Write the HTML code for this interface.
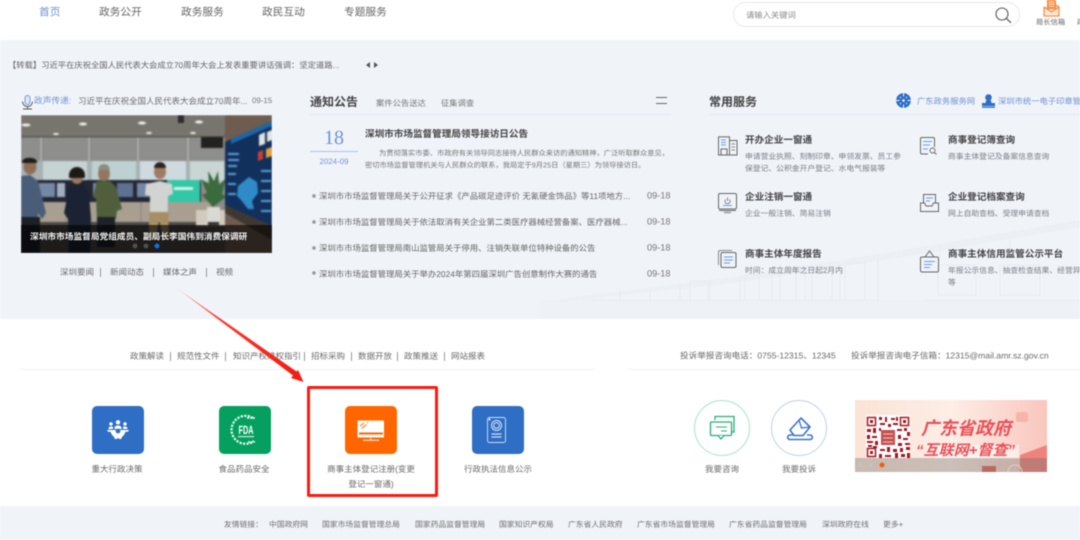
<!DOCTYPE html>
<html lang="zh-CN">
<head>
<meta charset="utf-8">
<title>深圳市市场监督管理局</title>
<style>
html,body{margin:0;padding:0;width:1080px;height:540px;overflow:hidden;background:#fff}
body{font-family:"Liberation Sans","Noto Sans CJK SC",sans-serif;color:#666;position:relative;text-rendering:geometricPrecision}
#p{position:absolute;left:0;top:0;width:1080px;height:540px;overflow:hidden;filter:blur(.4px)}
#p div,#p svg{position:absolute}
.t{white-space:nowrap;line-height:1;transform:translateY(-50%)}
.c{transform:translate(-50%,-50%);text-align:center}
.nav{font-size:10.7px;top:13px;color:#666}
.li{font-size:8.4px;left:319px;color:#666}
.dt{font-size:9.2px;left:647px;color:#777}
.h{font-size:9.6px;font-weight:700;color:#444}
.d{font-size:7.8px;color:#7b7f85}
.b{font-size:8.5px;top:356px;color:#6a6a6a}
.f{font-size:7.8px;top:525px;color:#6e6e6e}
.lb{font-size:8.5px;color:#6a6a6a}
.sp{width:1px;background:#999;height:9px}
.box{width:52px;height:48px;top:406px;border-radius:5px}
</style>
</head>
<body>
<div id="p">
<!-- backgrounds -->
<div style="left:0;top:40px;width:1080px;height:279px;background:#f0f4f9"></div>
<div style="left:0;top:506px;width:1080px;height:34px;background:#f0f4f9"></div>

<!-- bridge -->
<svg style="left:540px;top:205px" width="540" height="114" viewBox="0 0 540 114">
<rect x="0" y="95" width="540" height="19" fill="#edf0f5" opacity=".8"/>
<path d="M20 94 L193 72 L345 48 L540 15 L540 22 L345 55 L193 78 L20 97Z" fill="#e9edf2" opacity=".7"/>
<g fill="none" stroke="#e8ebf1" stroke-width="1">
<path d="M80 85v10M110 82v13M140 79v16M170 75v20M200 72v23M232 66v29M265 62v33M300 58v37M338 54v41"/>
<path d="M150 76h18v19h-18zM205 70h14v25h-14zM240 65h16v30h-16zM272 62h20v33h-20zM305 58h20v37h-20zM398 60h38v30h-38zM460 60h40v30h-40z"/>
<path d="M50 95h290M385 95h170"/>
<path d="M400 40v12M470 32v12"/>
</g>
</svg>

<!-- header -->
<div class="t nav" style="left:39px;color:#6f93d2">首页</div>
<div class="t nav" style="left:99px">政务公开</div>
<div class="t nav" style="left:181px">政务服务</div>
<div class="t nav" style="left:262px">政民互动</div>
<div class="t nav" style="left:344px">专题服务</div>
<div style="left:733px;top:2px;width:285px;height:23px;border:1px solid #e8e9eb;border-radius:13px;background:#fff"></div>
<div class="t" style="left:746px;top:14.500px;font-size:8.300px;color:#8a8a8a">请输入关键词</div>
<svg style="left:995px;top:7px" width="17" height="17" viewBox="0 0 17 17"><circle cx="7" cy="7" r="6" fill="none" stroke="#555" stroke-width="1.100"/><path d="M11.200 11.300l4.800 4.500" stroke="#555" stroke-width="1.200" fill="none"/></svg>
<svg style="left:1043px;top:0" width="17" height="17" viewBox="0 0 17 17"><path d="M1 7v9h15V7l-3-2M1 7l7.500 5L16 7" fill="#ffe9d8" stroke="#f47f2f" stroke-width="1.100"/><rect x="4" y="-2" width="9" height="11" rx="1" fill="#f9863a"/><path d="M5.500 2h6M5.500 4.200h6M5.500 6.400h6" stroke="#fff" stroke-width=".8"/></svg>
<div class="t" style="left:1036px;top:22px;font-size:7.300px;color:#666">局长信箱</div>
<div class="t" style="left:1077px;top:22px;font-size:7.300px;color:#666">政务</div>

<!-- ticker -->
<div class="t" style="left:8px;top:65px;font-size:8.300px;color:#666">【转载】习近平在庆祝全国人民代表大会成立70周年大会上发表重要讲话强调：坚定道路...</div>
<svg style="left:365px;top:61px" width="15" height="8" viewBox="0 0 15 8"><path d="M1 4l4-3v6zM9 1l4 3-4 3z" fill="#555"/></svg>

<!-- left col -->
<svg style="left:21px;top:95px" width="13" height="15" viewBox="0 0 13 15"><rect x="4" y=".5" width="5" height="9" rx="2.500" fill="#dbe7f8" stroke="#6d94d4" stroke-width=".9"/><path d="M1.500 6.500a5 5 0 0 0 10 0M6.500 11.500v2" fill="none" stroke="#555" stroke-width=".9"/><path d="M2 14h9" stroke="#555" stroke-width="1"/></svg>
<div class="t" style="left:34px;top:101px;font-size:8.700px;color:#6f93d2">政声传递:</div>
<div class="t" style="left:78px;top:101px;font-size:8.500px;color:#6d6d6d">习近平在庆祝全国人民代表大会成立70周年...</div>
<div class="t" style="left:252px;top:101px;font-size:7.900px;color:#777">09-15</div>

<div style="left:21px;top:115px;width:251px;height:138px;overflow:hidden">
<svg style="left:0;top:0;filter:blur(.8px)" width="251" height="138" viewBox="0 0 251 138">
<rect width="251" height="138" fill="#8d8b86"/>
<rect width="205" height="22" fill="#77756e"/>
<rect y="22" width="205" height="24" fill="#8e8e8c"/>
<path d="M20 22v24M68 22v24M117 22v24M167 22v24" stroke="#c2c2be" stroke-width="1"/>
<rect y="46" width="205" height="22" fill="#a7b2b2"/>
<rect x="22" y="46" width="44" height="20" fill="#c5d4d3"/>
<rect x="71" y="46" width="44" height="20" fill="#bed1d2"/>
<rect x="119" y="46" width="46" height="20" fill="#cfdadf"/>
<rect x="169" y="46" width="34" height="20" fill="#c9d6d4"/>
<rect y="21" width="205" height="1.500" fill="#5a574f"/>
<g fill="#f3f1e6"><ellipse cx="5" cy="10" rx="4.500" ry="1.500"/><ellipse cx="62" cy="9" rx="4" ry="1.500"/><ellipse cx="121" cy="8" rx="4" ry="1.500"/><ellipse cx="178" cy="7" rx="4" ry="1.500"/><ellipse cx="35" cy="19" rx="3" ry="1"/><ellipse cx="128" cy="18" rx="3" ry="1"/><ellipse cx="172" cy="18" rx="3" ry="1"/></g>
<rect x="180" y="22" width="22" height="11" fill="#22211f"/>
<rect x="157" y="0" width="6" height="8" fill="#2c2c2c"/>
<rect y="65" width="180" height="22" fill="#232735"/>
<g fill="#7487a3"><rect x="18" y="68" width="16" height="14"/><rect x="36" y="68" width="8" height="14" fill="#a2aec0"/><rect x="72" y="68" width="16" height="14"/><rect x="96" y="68" width="16" height="14" fill="#5d7190"/><rect x="116" y="68" width="14" height="14"/></g>
<rect y="87" width="190" height="20" fill="#a89f91"/>
<path d="M45 87v20M82 87v20M120 87v20M147 87v20" stroke="#8d8577"/>
<rect x="146" y="65" width="33" height="22" fill="#31c7a7"/>
<rect x="153" y="72" width="19" height="3" fill="#d5f2e9"/>
<rect y="107" width="205" height="31" fill="#4c4a46"/>
<rect x="175" y="95" width="30" height="16" fill="#d2cabd"/>
<path d="M192 92l-11-12 5-2-6-14 8 5-1-13 6 10 4-10 1 14 7-7-4 16 4 3z" fill="#3a6b3c"/>
<rect x="186" y="92" width="13" height="15" fill="#d9d9d5"/>
<rect x="187" y="107" width="11" height="3.500" fill="#33322f"/>
<rect x="204" y="0" width="47" height="138" fill="#6e5c50"/>
<path d="M204 27L251 6V111L204 90Z" fill="#12305c"/>
<path d="M210 24L251 6V11L210 29Z" fill="#1c66a8"/>
<path d="M217 71l11-9 8 5 1 11-6 8 2 8-6 0-7-9-4-4z" fill="#2f8bc8"/>
<path d="M238 20l6-3v12l-6 2zM246 17l5-2v10l-5 2z" fill="#e2e2e2"/>
<path d="M237 37l5-2v9l-5 2z" fill="#cf3c30"/><path d="M245 34l6-2v9l-6 2z" fill="#e0a23c"/>
<path d="M207 38h11v2h-11zM207 44h11v2h-11zM207 50h9v2h-9zM207 58h8v2h-8zM207 68h8v2h-8zM207 78h8v2h-8zM240 55h10v2h-10zM240 65h10v2h-10zM240 75h10v2h-10zM240 85h10v2h-10zM240 95h10v2h-10z" fill="#5fa0d6"/>
<path d="M204 90L251 111V125L204 98Z" fill="#3f3832"/>
<ellipse cx="9" cy="52" rx="6.500" ry="7.500" fill="#8f6e58"/><path d="M1 46a8 5 0 0 1 15 0v2H1z" fill="#1f1c1a"/>
<path d="M0 61l9-1 8 6 8 32-4 6-4-6 0 4H0z" fill="#4a5d78"/><rect x="0" y="102" width="19" height="36" fill="#1c1f26"/>
<ellipse cx="56" cy="62" rx="6" ry="7" fill="#9b7760"/><path d="M48 60a8 8 0 0 1 16 0l0 3H48z" fill="#1c1a18"/>
<path d="M49 69h13l6 10 2 24-1 35H48l-1-34-4-6z" fill="#1b2233"/>
<ellipse cx="83" cy="59" rx="6" ry="7" fill="#94755e"/><path d="M77 55a6 6 0 0 1 12 0z" fill="#8d8d84"/>
<path d="M76 66h13l6 6 6 22-5 2-1 8H76l-1-20-3-2z" fill="#4f5f3b"/><rect x="76" y="102" width="18" height="30" fill="#1d2128"/>
<ellipse cx="139" cy="57" rx="6" ry="7" fill="#a07b60"/><path d="M133 53a6 6 0 0 1 12 0z" fill="#2a2420"/>
<path d="M125 69l14-3 12 3 1 10-5 2 0 16h-18l0-16-5-1z" fill="#d2d4d1"/>
<path d="M128 97h19l1 26h-6l-4-20-3 20h-7z" fill="#a88e63"/>
</svg>
<svg style="left:0;top:0" width="251" height="138" viewBox="0 0 251 138">
<rect x="0" y="110" width="251" height="28" fill="#000" opacity=".62"/>
<circle cx="114" cy="131" r="2.500" fill="#4f4f4f"/><circle cx="125" cy="131" r="2.500" fill="#4f4f4f"/><circle cx="136" cy="131" r="2.500" fill="#0b6fe8"/>
</svg>
</div>
<div class="t" style="left:30px;top:237px;font-size:8.700px;font-weight:700;color:#f2f2f2">深圳市市场监督局党组成员、副局长李国伟到消费保调研</div>

<div class="t lb" style="left:60px;top:272px">深圳要闻</div>
<div class="sp" style="left:100px;top:268px"></div>
<div class="t lb" style="left:110px;top:272px">新闻动态</div>
<div class="sp" style="left:153px;top:268px"></div>
<div class="t lb" style="left:163px;top:272px">媒体之声</div>
<div class="sp" style="left:206px;top:268px"></div>
<div class="t lb" style="left:216px;top:272px">视频</div>

<!-- notices -->
<div class="t" style="left:310px;top:102px;font-size:12px;font-weight:700;color:#444">通知公告</div>
<div class="t" style="left:376px;top:102.500px;font-size:8.300px;color:#777">案件公告送达</div>
<div class="t" style="left:441px;top:102.500px;font-size:8.300px;color:#777">征集调查</div>
<div style="left:656px;top:97px;width:11px;height:1px;background:#666"></div>
<div style="left:656px;top:103px;width:11px;height:1px;background:#666"></div>
<div style="left:310px;top:114px;width:361px;height:1px;background:#e4e8ee"></div>
<div class="t c" style="left:334px;top:137.500px;font-family:'Liberation Serif',serif;font-size:20px;color:#6f93d2">18</div>
<div style="left:310px;top:151px;width:48px;height:1px;background:#a9c2ea"></div>
<div class="t c" style="left:334px;top:162px;font-size:7.900px;color:#6f93d2">2024-09</div>
<div class="t" style="left:365px;top:134.500px;font-size:9.600px;font-weight:700;color:#444">深圳市市场监督管理局领导接访日公告</div>
<div class="t" style="left:379px;top:153px;font-size:7.250px;color:#777">为贯彻落实市委、市政府有关领导同志接待人民群众来访的通知精神，广泛听取群众意见，</div>
<div class="t" style="left:365px;top:165px;font-size:7.250px;color:#777">密切市场监督管理机关与人民群众的联系，我局定于9月25日（星期三）为领导接访日。</div>

<svg style="left:311px;top:193px" width="6" height="84" viewBox="0 0 6 84"><g fill="#aaa" stroke="#888" stroke-width=".8"><circle cx="3" cy="3" r="1.300"/><circle cx="3" cy="29" r="1.300"/><circle cx="3" cy="55" r="1.300"/><circle cx="3" cy="80" r="1.300"/></g></svg>
<div class="t li" style="top:196px">深圳市市场监督管理局关于公开征求《产品碳足迹评价 无氰硬金饰品》等11项地方...</div>
<div class="t dt" style="top:196px">09-18</div>
<div class="t li" style="top:222px">深圳市市场监督管理局关于依法取消有关企业第二类医疗器械经营备案、医疗器械...</div>
<div class="t dt" style="top:222px">09-18</div>
<div class="t li" style="top:248px">深圳市市场监督管理局南山监管局关于停用、注销失联单位特种设备的公告</div>
<div class="t dt" style="top:248px">09-18</div>
<div class="t li" style="top:273.500px">深圳市市场监督管理局关于举办2024年第四届深圳广告创意制作大赛的通告</div>
<div class="t dt" style="top:273.500px">09-18</div>

<!-- services -->
<div class="t" style="left:709px;top:102px;font-size:12px;font-weight:700;color:#444">常用服务</div>
<svg style="left:896px;top:93px" width="15" height="15" viewBox="0 0 15 15"><circle cx="7.500" cy="7.500" r="7.400" fill="#2f6fc4"/><path d="M7.500 0v3.500M7.500 11.500V15M0 7.500h3.500M11.500 7.500H15M5 5l-1-1M10 5l1-1M5 10l-1 1M10 10l1 1" stroke="#f0f4f9" stroke-width="1"/><circle cx="7.500" cy="7.500" r="1.300" fill="#f0f4f9"/></svg>
<div class="t" style="left:917px;top:101px;font-size:8.300px;color:#6f93d2">广东政务服务网</div>
<svg style="left:982px;top:94px" width="13" height="14" viewBox="0 0 13 14"><circle cx="6.500" cy="3.500" r="3.300" fill="#2f6fc4"/><path d="M4 6.500h5l.5 2.500h3.500v3H0V9h3.500z" fill="#2f6fc4"/><rect y="12.500" width="13" height="1.300" fill="#2f6fc4"/></svg>
<div class="t" style="left:998px;top:101px;font-size:8.300px;color:#6f93d2">深圳市统一电子印章管理</div>
<div style="left:709px;top:114px;width:371px;height:1px;background:#e4e8ee"></div>

<!-- service rows -->
<svg style="left:718px;top:136px" width="20" height="20" viewBox="0 0 20 20"><g fill="none" stroke="#666" stroke-width="1"><path d="M.5 19V.9h11V19zM11.500 4.500H19V19H.5M3 19v-6h6v6"/><path d="M13.500 8h3.500M13.500 11h3.500M13.500 14h3.500" stroke-width=".8"/></g><path d="M3 4h5M3 6.500h5M3 9h5" stroke="#6b9be0" stroke-width=".9" fill="none"/></svg>
<svg style="left:718px;top:193px" width="20" height="21" viewBox="0 0 20 21"><rect x=".5" y=".5" width="18" height="15.500" rx="1.500" fill="none" stroke="#666"/><path d="M1 17.500h17" stroke="#666"/><path d="M6 19.500h7" stroke="#999" stroke-width="1.500"/><path d="M5 12.500h9" stroke="#6b9be0"/><path d="M9.500 4.500v3.500M7.500 6.500a2.600 2.600 0 1 0 4 0" stroke="#666" fill="none" stroke-width=".8"/></svg>
<svg style="left:718px;top:250px" width="19" height="18" viewBox="0 0 19 18"><path d="M.5 15V2C.5 1 1 .5 2 .5h12" fill="none" stroke="#888"/><rect x="3" y="2.500" width="15" height="15" rx="1.500" fill="none" stroke="#666"/><path d="M6 7h9M6 10h9M6 13h6" stroke="#6b9be0" stroke-width=".9"/></svg>
<div class="t h" style="left:745px;top:140.500px">开办企业一窗通</div>
<div class="t d" style="left:745px;top:157px">申请营业执照、刻制印章、申领发票、员工参</div>
<div class="t d" style="left:745px;top:169px">保登记、公积金开户登记、水电气报装等</div>
<div class="t h" style="left:745px;top:197.500px">企业注销一窗通</div>
<div class="t d" style="left:745px;top:213.500px">企业一般注销、简易注销</div>
<div class="t h" style="left:745px;top:254.500px">商事主体年度报告</div>
<div class="t d" style="left:745px;top:271px">时间：成立周年之日起2月内</div>

<svg style="left:920px;top:137px" width="18" height="19" viewBox="0 0 18 19"><path d="M14.500 10V2C14.500 1 14 .5 13 .5H2C1 .5.5 1 .5 2v13.500c0 1 .5 1.500 1.500 1.500h6" fill="none" stroke="#666"/><path d="M3 4.500h9M3 8h7M3 12h5" stroke="#6b9be0"/><circle cx="12.500" cy="13.500" r="2.500" fill="none" stroke="#666" stroke-width=".9"/><path d="M14.500 15.500l2 2" stroke="#666"/></svg>
<svg style="left:920px;top:193px" width="19" height="20" viewBox="0 0 19 20"><path d="M3.500 10V1.500h12V10" fill="none" stroke="#666"/><path d="M.5 10v8.500h18V10h-5L12 13H6l-1.500-3z" fill="none" stroke="#666"/><path d="M6 5h7M6 8h4" stroke="#6b9be0"/></svg>
<svg style="left:920px;top:250px" width="19" height="23" viewBox="0 0 19 23"><path d="M9.500 1L5 7h9z" fill="none" stroke="#666"/><rect x=".5" y="7" width="18" height="15" rx="1.500" fill="none" stroke="#666"/><path d="M4 11.500h11M4 14.500h8M4 17.500h6" stroke="#6b9be0"/></svg>
<div class="t h" style="left:948px;top:140.500px">商事登记簿查询</div>
<div class="t d" style="left:948px;top:157px">商事主体登记及备案信息查询</div>
<div class="t h" style="left:948px;top:197.500px">企业登记档案查询</div>
<div class="t d" style="left:948px;top:213.500px">网上自助查档、受理申请查档</div>
<div class="t h" style="left:948px;top:254.500px">商事主体信用监管公示平台</div>
<div class="t d" style="left:948px;top:270.500px">年报公示信息、抽查检查结果、经营异常</div>
<div class="t d" style="left:948px;top:282.500px">等</div>

<!-- bottom links -->
<div class="t b" style="left:130px">政策解读</div>
<div class="sp" style="left:170px;top:352px"></div>
<div class="t b" style="left:177px">规范性文件</div>
<div class="sp" style="left:225px;top:352px"></div>
<div class="t b" style="left:233px">知识产权维权指引</div>
<div class="sp" style="left:304px;top:352px"></div>
<div class="t b" style="left:311px">招标采购</div>
<div class="sp" style="left:351px;top:352px"></div>
<div class="t b" style="left:358px">数据开放</div>
<div class="sp" style="left:397px;top:352px"></div>
<div class="t b" style="left:404px">政策推送</div>
<div class="sp" style="left:444px;top:352px"></div>
<div class="t b" style="left:451px">网站报表</div>
<div class="t b" style="left:680px;font-size:8.600px">投诉举报咨询电话：0755-12315、12345</div>
<div class="t b" style="left:851px;font-size:8.600px">投诉举报咨询电子信箱：12315@mail.amr.sz.gov.cn</div>
<div style="left:20px;top:369px;width:574px;height:1px;background:#f1f1f1"></div>
<div style="left:628px;top:369px;width:452px;height:1px;background:#f1f1f1"></div>

<!-- app icons -->
<div class="box" style="left:92px;background:#2e6ec4"></div>
<svg style="left:107px;top:420px" width="22" height="19" viewBox="0 0 22 19"><g fill="#fff"><circle cx="11" cy="2.300" r="2.200"/><circle cx="4" cy="4" r="1.700"/><circle cx="18" cy="4" r="1.700"/><path d="M7.500 8c0-3.300 7-3.300 7 0v1h-7zM1.500 8.500c0-2 3-2.500 4.500-1.500v2H1.500zM20.500 8.500c0-2-3-2.500-4.500-1.500v2h4.500z"/><path d="M0 10h22l-1 1.800h-2.500c-1 2.700-2 4-3 4.500L14 19h-1.500l-1.500-1-1.500 1H8l-1.500-2.700c-1-.5-2-1.800-3-4.500H1z"/></g><circle cx="11" cy="11" r="2.400" fill="#2e6ec4"/></svg>
<div class="t lb c" style="left:117px;top:469px">重大行政决策</div>

<div class="box" style="left:218.500px;background:#05a05f"></div>
<svg style="left:229px;top:414px" width="29" height="32" viewBox="0 0 29 32"><g fill="none" stroke="#eaf8f1" stroke-width="2.200" stroke-dasharray="2.200 1.300"><path d="M24 4A14 14 0 1 0 25 27"/></g><text x="17" y="20" text-anchor="middle" font-size="12" font-weight="700" fill="#fff" font-family="'Liberation Sans',sans-serif" textLength="15" lengthAdjust="spacingAndGlyphs">FDA</text><rect x="9" y="22" width="16" height="1.200" fill="#cdeedd"/><path d="M18 4h8M19 28h7" stroke="#eaf8f1" stroke-width="1.500" stroke-dasharray="2 1"/></svg>
<div class="t lb c" style="left:244px;top:469px">食品药品安全</div>

<div class="box" style="left:345px;background:#ff6600"></div>
<svg style="left:357px;top:420px" width="28" height="22" viewBox="0 0 28 22"><rect x=".5" y=".5" width="26.500" height="17" rx=".8" fill="#fff"/><rect x="2" y="12.500" width="24" height="2" fill="#ff6600"/><path d="M3 6l4-3M4.500 8.500l5-4M10 3l1-.7" stroke="#ff8a2c" stroke-width="1.200"/><rect x="13" y="18" width="1.500" height="2" fill="#ffc9a3"/><rect x="6" y="19.500" width="16" height="1.500" fill="#ffc9a3"/></svg>
<div class="t lb c" style="left:371px;top:469px">商事主体登记注册(变更</div>
<div class="t lb c" style="left:371px;top:483.500px">登记一窗通)</div>

<div class="box" style="left:472px;background:#2e6ec4"></div>
<svg style="left:486px;top:416px" width="21" height="28" viewBox="0 0 21 28"><rect x="1.500" y="1.500" width="18" height="25" rx="2" fill="none" stroke="#cfe0f6" stroke-width=".9"/><circle cx="10.500" cy="9.500" r="5" fill="none" stroke="#dce8f8" stroke-width="1"/><circle cx="10.500" cy="9.500" r="2.800" fill="none" stroke="#dce8f8" stroke-width="1"/><circle cx="3.500" cy="3.500" r="1" fill="#fff"/><path d="M5.500 18h10M5.500 21h10" stroke="#cfe0f6" stroke-width="1.200"/></svg>
<div class="t lb c" style="left:498px;top:469px">行政执法信息公示</div>

<!-- red highlight -->
<div style="left:307px;top:386px;width:125px;height:105px;border:3px solid #fb1a12;border-radius:2px"></div>
<svg style="left:0;top:0" width="1080" height="540" viewBox="0 0 1080 540">
<defs><linearGradient id="g" x1="175" y1="287" x2="303" y2="382" gradientUnits="userSpaceOnUse"><stop offset="0" stop-color="#ff8a80" stop-opacity=".5"/><stop offset=".35" stop-color="#fa3a30"/><stop offset="1" stop-color="#f5190f"/></linearGradient></defs>
<path d="M175 287L296.500 371.500 298 370 303.500 382 291 378 293 375.500Z" fill="url(#g)"/>
</svg>

<!-- consult -->
<svg style="left:693px;top:399px" width="58" height="58" viewBox="0 0 58 58"><circle cx="29" cy="29" r="27.500" fill="#fff" stroke="#a6e3c9"/><path d="M22 21v-3.500h19v15.500h-3" fill="none" stroke="#26af7a" stroke-width="1.300"/><rect x="17.500" y="23" width="21" height="13.500" rx="1" fill="#fff" stroke="#26af7a" stroke-width="1.300"/><path d="M25 36.500l3 3.500 3-3.500" fill="#fff" stroke="#26af7a" stroke-width="1.300"/><path d="M23 28h11M28 32h6" stroke="#26af7a" stroke-width="1"/></svg>
<div class="t lb c" style="left:722px;top:468.500px">我要咨询</div>
<svg style="left:770px;top:399px" width="58" height="58" viewBox="0 0 58 58"><circle cx="29" cy="29" r="27.500" fill="#fff" stroke="#bcd0ef"/><path d="M31 19L40 28 33 36.500H24L20 31z" fill="#fff" stroke="#3a74cb" stroke-width="1.600" stroke-linejoin="round"/><path d="M29 21l2.500 8 8-1" fill="none" stroke="#3a74cb" stroke-width="1.300"/><path d="M23 36h-3c-3 0-3 4.500 0 4.500h20c3 0 3-4.500 0-4.500h-3" fill="none" stroke="#3a74cb" stroke-width="1.600"/></svg>
<div class="t lb c" style="left:799px;top:468.500px">我要投诉</div>

<!-- banner -->
<svg style="left:855px;top:400px" width="192" height="72" viewBox="0 0 192 72">
<defs><linearGradient id="bg" x1="0" y1="0" x2="1" y2="0"><stop offset="0" stop-color="#fbe3d6"/><stop offset=".5" stop-color="#fdeee6"/><stop offset="1" stop-color="#f9c6bd"/></linearGradient></defs>
<rect width="192" height="72" fill="url(#bg)"/>
<rect x="161" y="12" width="12" height="10" rx="2" fill="#f6b5ac"/>
<rect x="80" y="45" width="84" height="14" fill="#fff" opacity=".55"/>
<path d="M165 55l27-10v27h-27z" fill="#ec6a66" opacity=".75"/>
<rect x="11" y="15" width="44" height="43" fill="#fff"/>
<g fill="none" stroke="#a01820" stroke-width="1.500"><rect x="12.500" y="17.500" width="8" height="8"/><rect x="45.500" y="17.500" width="8" height="8"/><rect x="12.500" y="48.500" width="8" height="8"/></g>
<path d="M15 20h3v3h-3zM48 20h3v3h-3zM15 51h3v3h-3zM24 17h3v3h-3zM30 17h2v5h-2zM36 18h4v2h-4zM41 17h2v4h-2zM25 23h5v2h-5zM33 24h3v3h-3zM38 23h5v2h-5zM12 29h4v3h-4zM18 28h3v5h-3zM24 28h2v3h-2zM42 29h5v2h-5zM49 28h3v3h-3zM52 32h3v4h-3zM12 35h3v4h-3zM17 36h5v2h-5zM12 41h6v2h-6zM20 41h3v4h-3zM43 35h3v4h-3zM48 38h5v2h-5zM43 43h4v3h-4zM50 43h5v2h-5zM25 49h5v2h-5zM32 47h3v5h-3zM38 49h4v3h-4zM45 48h3v4h-3zM51 47h4v3h-4zM24 54h3v4h-3zM30 55h6v2h-6zM40 53h3v5h-3zM46 54h4v3h-4zM52 53h3v5h-3zM13 45h4v2h-4zM18 46h4v2h-4z" fill="#a01820"/>
<rect x="26" y="30" width="14" height="15" fill="#c7504f"/><path d="M28 34h10M28 38h10M28 42h10" stroke="#f0c4c2"/>
<text x="66" y="34.500" font-size="18" font-weight="700" font-style="italic" fill="#ea4f58" font-family="'Liberation Sans','Noto Sans CJK SC',sans-serif" textLength="90" lengthAdjust="spacingAndGlyphs">广东省政府</text>
<text x="61" y="55" font-size="14.500" font-weight="700" font-style="italic" fill="#ea4f58" font-family="'Liberation Sans','Noto Sans CJK SC',sans-serif" textLength="99" lengthAdjust="spacingAndGlyphs">“互联网+督查”</text>
<rect y="58" width="192" height="14" fill="#6f6f6a" opacity=".36"/>
<circle cx="5" cy="65" r="2.500" fill="#c5c0ba"/><circle cx="16" cy="65" r="2.500" fill="#c5c0ba"/><circle cx="27" cy="65" r="2.500" fill="#f25f0c"/>
<rect x="127" y="66" width="14" height="6" fill="#b96a60"/><circle cx="160" cy="72" r="7" fill="none" stroke="#d9d3ce"/>
</svg>

<!-- footer -->
<div class="t f" style="left:224px">友情链接：</div>
<div class="t f" style="left:269px">中国政府网</div>
<div class="t f" style="left:322px">国家市场监督管理总局</div>
<div class="t f" style="left:415px">国家药品监督管理局</div>
<div class="t f" style="left:499px">国家知识产权局</div>
<div class="t f" style="left:568px">广东省人民政府</div>
<div class="t f" style="left:637px">广东省市场监督管理局</div>
<div class="t f" style="left:729px">广东省药品监督管理局</div>
<div class="t f" style="left:822px">深圳政府在线</div>
<div class="t f" style="left:883px">更多+</div>
</div>
</body>
</html>
